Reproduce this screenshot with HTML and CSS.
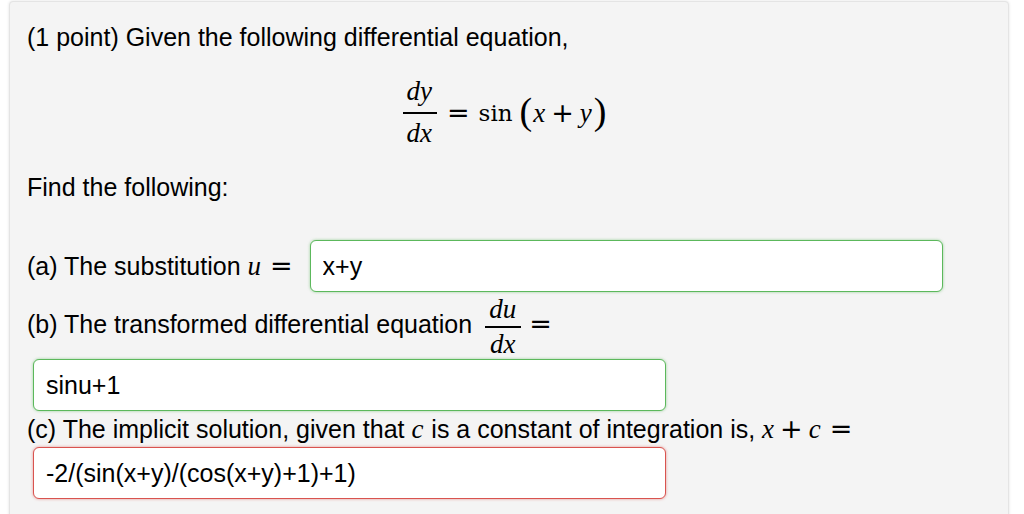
FILE: index.html
```html
<!DOCTYPE html>
<html>
<head>
<meta charset="utf-8">
<link rel="stylesheet" href="styles.css">
</head>
<body>
<div class="card">
  <p class="line intro">(1 point) Given the following differential equation,</p>
  <div class="display">
    <span class="frac frac-display"><span class="num"><i>dy</i></span><span class="den"><i>dx</i></span></span>
    <span class="op op-rel">=</span>
    <span class="fn">sin</span>
    <span class="paren">(</span><i>x</i><span class="op op-bin">+</span><i>y</i><span class="paren">)</span>
  </div>
  <p class="line find">Find the following:</p>
  <div class="row-a">
    <span class="line">(a) The substitution <span class="math"><i>u</i><span class="op op-rel">=</span></span></span>
    <input class="field ok field-a" type="text" value="x+y" readonly>
  </div>
  <p class="line row-b">(b) The transformed differential equation <span class="math"><span class="frac frac-inline"><span class="num"><i>du</i></span><span class="den"><i>dx</i></span></span><span class="op op-rel">=</span></span></p>
  <input class="field ok field-wide" type="text" value="sinu+1" readonly>
  <p class="line row-c">(c) The implicit solution, given that <span class="math"><i>c</i></span> is a constant of integration is, <span class="math"><i>x</i><span class="op op-bin">+</span><i>c</i><span class="op op-rel">=</span></span></p>
  <input class="field bad field-wide" type="text" value="-2/(sin(x+y)/(cos(x+y)+1)+1)" readonly>
</div>
</body>
</html>
```

FILE: styles.css
```css
html, body {
  margin: 0;
  padding: 0;
  background: #ffffff;
}

body {
  font-family: "Liberation Sans", Arial, sans-serif;
  font-size: 25px;
  color: #000;
  overflow: hidden;
}

.card {
  margin: 1px 15px 0 9px;
  height: 560px;
  box-sizing: border-box;
  background: #f4f4f4;
  border: 1px solid #e4e4e4;
  border-radius: 4px;
  box-shadow: 0 0 3px rgba(0, 0, 0, 0.12);
  padding: 21px 17px 0 17px;
}

.line {
  margin: 0;
  line-height: 28px;
}

i {
  font-family: "Liberation Serif", "Times New Roman", serif;
  font-style: italic;
  font-size: 27px;
  padding-right: 1px;
}

.math {
  font-family: "Liberation Serif", serif;
  white-space: nowrap;
}

.op {
  font-family: "DejaVu Sans", sans-serif;
  font-size: 27px;
  font-style: normal;
  font-weight: normal;
}

.op-rel {
  margin: 0 6px 0 8px;
}

.op-bin {
  margin: 0 6px 0 5px;
}

.display {
  margin-top: 30px;
  display: flex;
  justify-content: center;
  align-items: center;
  line-height: 24px;
  font-family: "DejaVu Serif", serif;
  font-size: 22px;
  height: 64px;
  padding-right: 8px;
}

.display .op-rel {
  margin: 0 9px 0 10px;
}

.fn {
  font-family: "DejaVu Serif", serif;
  font-size: 23px;
  margin-right: 6px;
}

.paren {
  font-family: "Liberation Serif", serif;
  font-size: 38px;
  line-height: 24px;
  position: relative;
  top: -2px;
  margin: 0 1px;
}

.frac {
  display: inline-flex;
  flex-direction: column;
  align-items: center;
  vertical-align: middle;
  line-height: 24px;
}

.frac .num {
  border-bottom: 2px solid #000;
  padding: 0 4px;
}

.frac-display .num {
  padding-bottom: 7px;
}

.frac-display .den {
  padding-top: 7px;
}

.frac-inline {
  margin-left: 6px;
}

.frac-inline .num {
  padding-bottom: 4px;
}

.frac-inline .den {
  padding-top: 4px;
}

.find {
  margin-top: 28px;
}

.row-a {
  margin-top: 39px;
  display: flex;
  align-items: center;
}

.field {
  box-sizing: border-box;
  height: 52px;
  width: 633px;
  background: #fff;
  border-radius: 6px;
  font-family: "Liberation Sans", Arial, sans-serif;
  font-size: 25px;
  color: #000;
  padding: 0 12px;
  outline: none;
  display: block;
}

.ok {
  border: 1px solid #5cb85c;
  box-shadow: 0 0 3px rgba(92, 184, 92, 0.6);
}

.bad {
  border: 1px solid #d9534f;
  box-shadow: 0 0 3px rgba(217, 83, 79, 0.6);
}

.field-a {
  margin-left: 11px;
}

.field-wide {
  margin-left: 6px;
}

.row-b {
  margin-top: 5px;
}

.row-b + .field {
  margin-top: 2px;
}

.row-c {
  margin-top: 4px;
}

.row-c + .field {
  margin-top: 3px;
}
```
